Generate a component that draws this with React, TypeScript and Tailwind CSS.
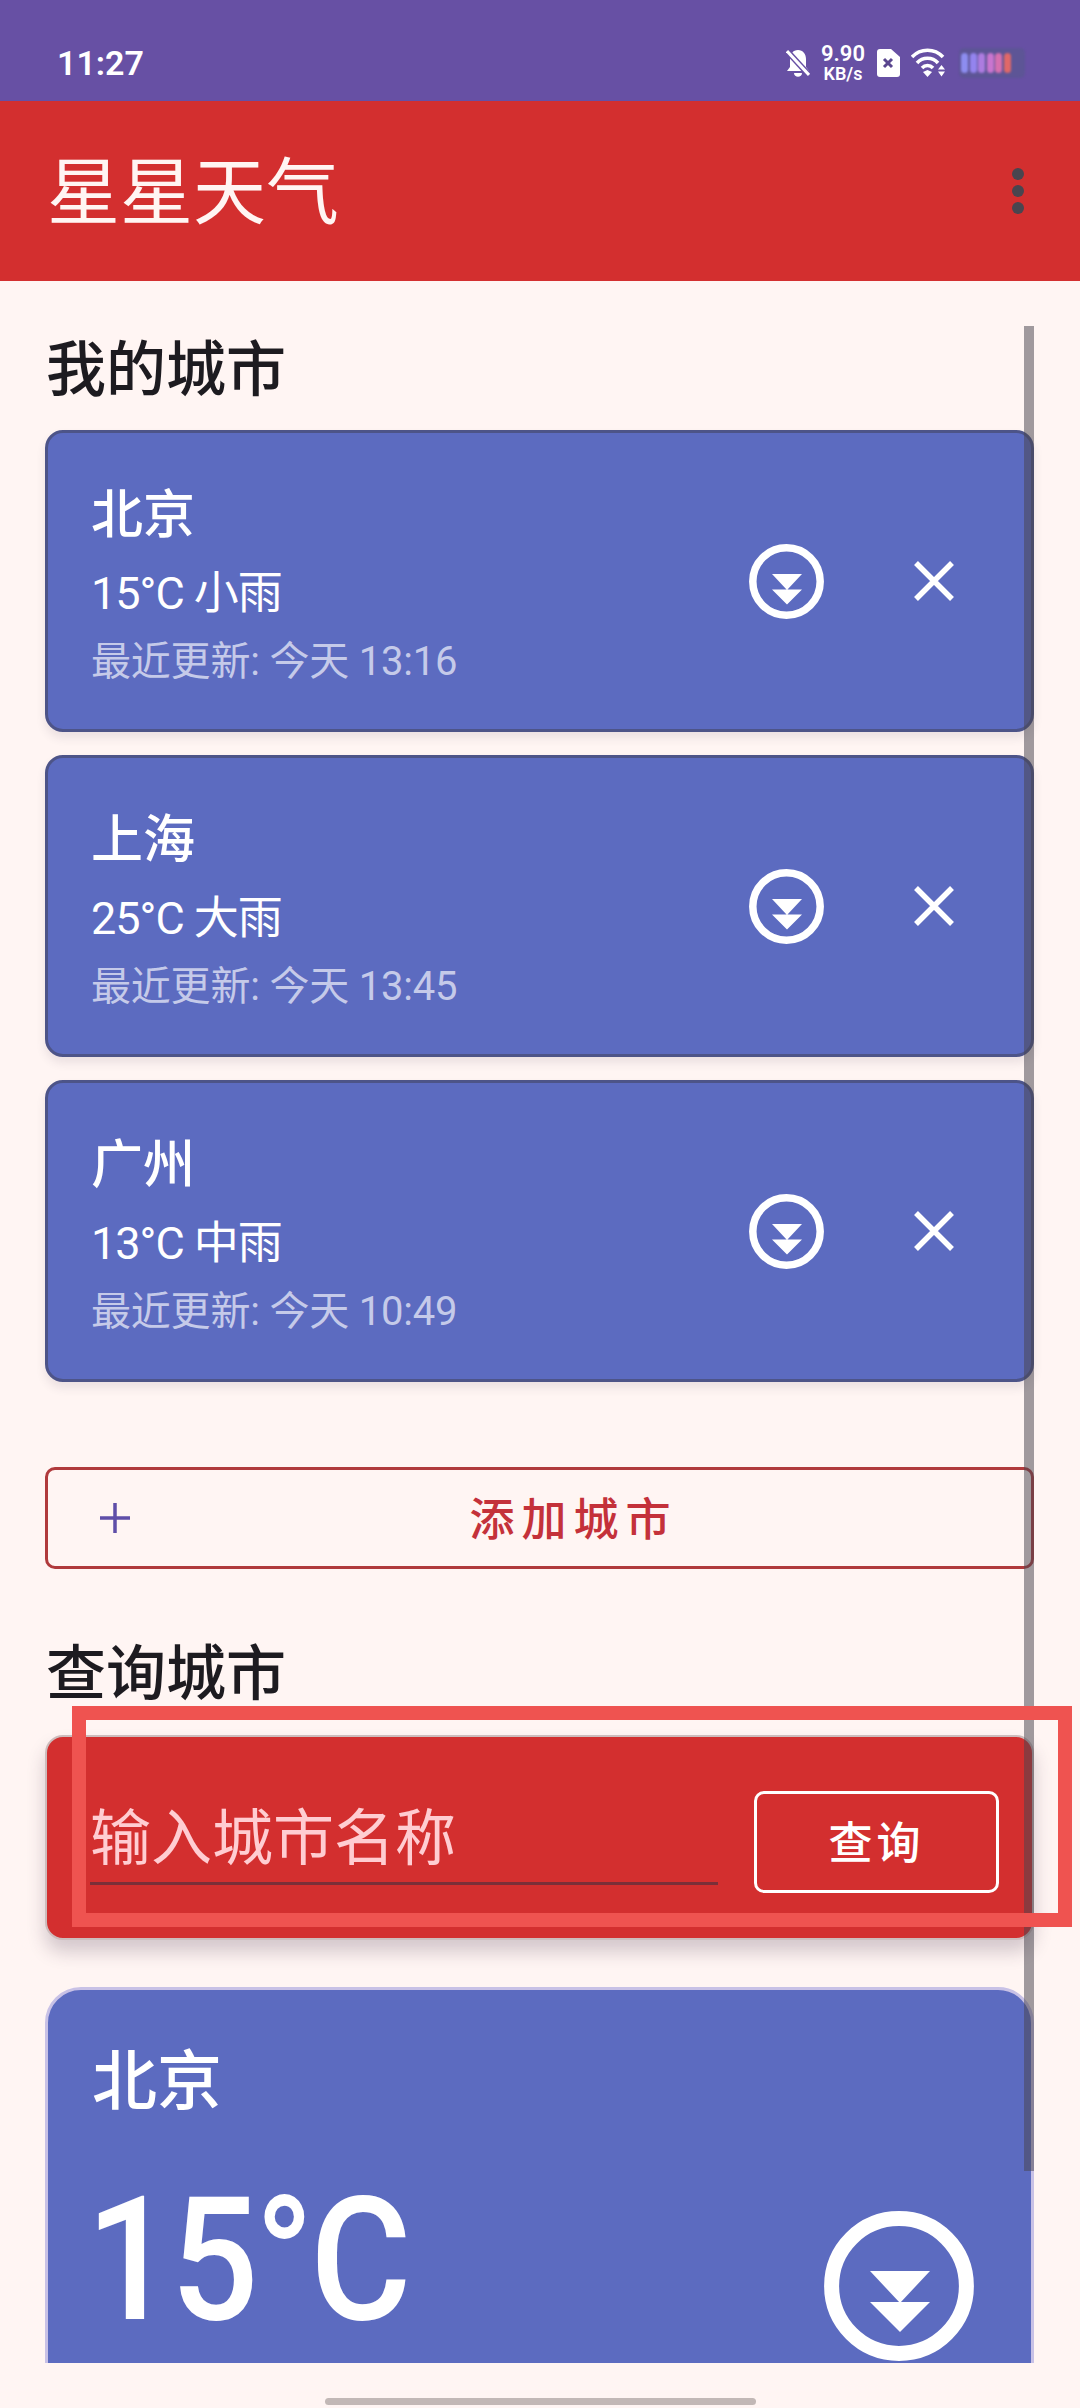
const font = { fontFamily: 'Roboto,"Noto Sans CJK SC",sans-serif' };

function DownCircle({ size }: { size: number }) {
  return (
    <svg width={size} height={size} viewBox="0 0 75 75" className="block shrink-0">
      <circle cx="37.5" cy="37.5" r="33.7" fill="none" stroke="#fff" strokeWidth="7.5" />
      <path d="M23 30h30L38 46zM23 45.500h30L38 60.500z" fill="#fff" />
    </svg>
  );
}

function CityCard({ name, temp, time }: { name: string; temp: string; time: string }) {
  return (
    <div className="flex h-[302px] items-center justify-between rounded-[18px] border-[3px] border-[#4d5488] bg-[#5c6bc0] pl-[43px] pr-[77px] shadow-[0_6px_10px_rgba(60,50,80,0.10)]">
      <div className="pt-[11px] text-white">
        <div className="h-[76px] text-[52px] font-medium leading-[76px]">{name}</div>
        <div className="mt-[6px] h-[68px] text-[45px] leading-[68px] tracking-[-1px]">{temp}</div>
        <div className="h-[68px] text-[40px] leading-[68px] tracking-[-0.2px] text-[#c5cae9]">{time}</div>
      </div>
      <div className="flex items-center gap-[90px]">
        <DownCircle size={75} />
        <svg width="40" height="40" viewBox="0 0 40 40" className="block">
          <path d="M2 2l36 36M38 2L2 38" stroke="#fff" strokeWidth="5.500" fill="none" />
        </svg>
      </div>
    </div>
  );
}

export default function App() {
  return (
    <div className="relative flex h-[2408px] w-[1080px] flex-col overflow-hidden bg-[#fff5f3]" style={font}>
      <div className="flex h-[101px] shrink-0 items-center justify-between bg-[#6750a4] pl-[57px] pr-[55px] pt-[24px] text-white">
        <span className="text-[34px] font-semibold leading-none">11:27</span>
        <div className="flex items-center">
          <svg width="24" height="28" viewBox="0 0 24 28" className="block">
            <path d="M12 1c5 0 8 4 8 9v8l3 4H1l3-4v-8c0-5 3-9 8-9zM8 24h8c0 5-8 5-8 0z" fill="#fff" />
            <path d="M1 2l22 24" stroke="#6750a4" strokeWidth="6" />
            <path d="M1 2l22 24" stroke="#fff" strokeWidth="3" />
          </svg>
          <div className="ml-[12px] flex w-[42px] flex-col items-center font-semibold">
            <span className="text-[22px] leading-[22px]">9.90</span>
            <span className="text-[18px] leading-[18px]">KB/s</span>
          </div>
          <svg width="23" height="28" viewBox="0 0 23 28" className="ml-[13px] block">
            <path d="M3 0h11l9 8v17a3 3 0 0 1-3 3H3a3 3 0 0 1-3-3V3a3 3 0 0 1 3-3z" fill="#fff" />
            <path d="M7 10l8 8M15 10l-8 8" stroke="#5a468f" strokeWidth="3" />
          </svg>
          <svg width="35" height="29" viewBox="0 0 35 29" className="ml-[11px] block">
            <path d="M1 9a21 21 0 0 1 31 0M6 15a14 14 0 0 1 21 0M11 20a7.500 7.500 0 0 1 11 0" fill="none" stroke="#fff" strokeWidth="3.500" />
            <path d="M12 24l4.500-2 4.500 2-4.500 5z" fill="#fff" />
            <path d="M27 21.500l3.500-4.500 3.500 4.500zM27 23.500h7l-3.500 5z" fill="#fff" />
          </svg>
          <div className="ml-[13px] flex h-[30px] w-[66px] items-center gap-[1.5px] rounded-[5px] bg-[#5d5596] pl-[2px] blur-[1px]">
            <span className="h-[20px] w-[7px] rounded-full bg-[#8d8df0]" />
            <span className="h-[20px] w-[7px] rounded-full bg-[#9484ee]" />
            <span className="h-[20px] w-[7px] rounded-full bg-[#ad7ce0]" />
            <span className="h-[20px] w-[7px] rounded-full bg-[#c975cf]" />
            <span className="h-[20px] w-[7px] rounded-full bg-[#d670b0]" />
            <span className="h-[20px] w-[7px] rounded-full bg-[#e06868]" />
          </div>
        </div>
      </div>

      <div className="flex h-[180px] shrink-0 items-center justify-between bg-[#d32f2f] pl-[47px] pr-[56px]">
        <span className="pt-[4px] text-[73px] leading-none text-[#fff5f3]">星星天气</span>
        <div className="flex flex-col gap-[5px]">
          <span className="h-[12px] w-[12px] rounded-full bg-[#49454f]" />
          <span className="h-[12px] w-[12px] rounded-full bg-[#49454f]" />
          <span className="h-[12px] w-[12px] rounded-full bg-[#49454f]" />
        </div>
      </div>

      <div className="min-h-0 flex-1 overflow-hidden pl-[45px] pr-[46px] pt-[50px]">
        <div className="ml-[1px] h-[99px] text-[60px] font-medium leading-[80px] text-[#1d1b20]">我的城市</div>
        <div className="flex flex-col gap-[23px]">
          <CityCard name="北京" temp="15°C 小雨" time="最近更新: 今天 13:16" />
          <CityCard name="上海" temp="25°C 大雨" time="最近更新: 今天 13:45" />
          <CityCard name="广州" temp="13°C 中雨" time="最近更新: 今天 10:49" />
        </div>

        <div className="mt-[85px] flex h-[102px] items-center rounded-[10px] border-[3px] border-[#b03a3c] pl-[52px] pr-[14px]">
          <svg width="30" height="30" viewBox="0 0 30 30" className="block shrink-0">
            <path d="M15 0v30M0 15h30" stroke="#5f4ea8" strokeWidth="3.500" />
          </svg>
          <span className="flex-1 pt-[4px] text-center text-[45px] font-medium leading-none tracking-[7px] text-[#c4313a]">添加城市</span>
        </div>

        <div className="ml-[1px] mt-[66px] h-[100px] text-[60px] font-medium leading-[80px] text-[#1d1b20]">查询城市</div>

        <div className="flex h-[205px] items-end rounded-[18px] border-[2px] border-[#cdbcbc] bg-[#d32f2f] pb-[45px] pl-[43px] pr-[33px] shadow-[0_12px_18px_rgba(60,40,70,0.22)]">
          <div className="mb-[8px] h-[96px] w-[628px] border-b-[3px] border-[#7a2f38] text-[61px] leading-[100px] text-[#ffcdd2]">输入城市名称</div>
          <div className="ml-[36px] flex h-[102px] w-[245px] items-center justify-center rounded-[10px] border-[3px] border-white pt-[4px] text-[44px] font-medium tracking-[4px] text-white">查询</div>
        </div>

        <div className="relative mt-[47px] h-[420px] rounded-t-[36px] border-[3px] border-[#c8c1e6] bg-[#5c6bc0] pl-[44px] pt-[47px] text-white">
          <div className="h-[100px] text-[65px] font-medium leading-[90px]">北京</div>
          <div className="-ml-[6px] mt-[18px] origin-left scale-x-[0.9] text-[172px] font-medium leading-[210px] tracking-[-4px]">15°C</div>
          <div className="absolute right-[57px] top-[221px]">
            <DownCircle size={150} />
          </div>
        </div>
      </div>

      <div className="flex h-[45px] shrink-0 items-end justify-center pb-[3px]">
        <div className="h-[7px] w-[431px] rounded-full bg-[#c2b8b6]" />
      </div>

      <div className="absolute left-[1024px] top-[326px] h-[1845px] w-[10px] bg-[rgba(73,69,79,0.52)]" />
      <div className="absolute left-[72px] top-[1706px] h-[221px] w-[1000px] border-[14px] border-[#ef5350]" />
    </div>
  );
}
